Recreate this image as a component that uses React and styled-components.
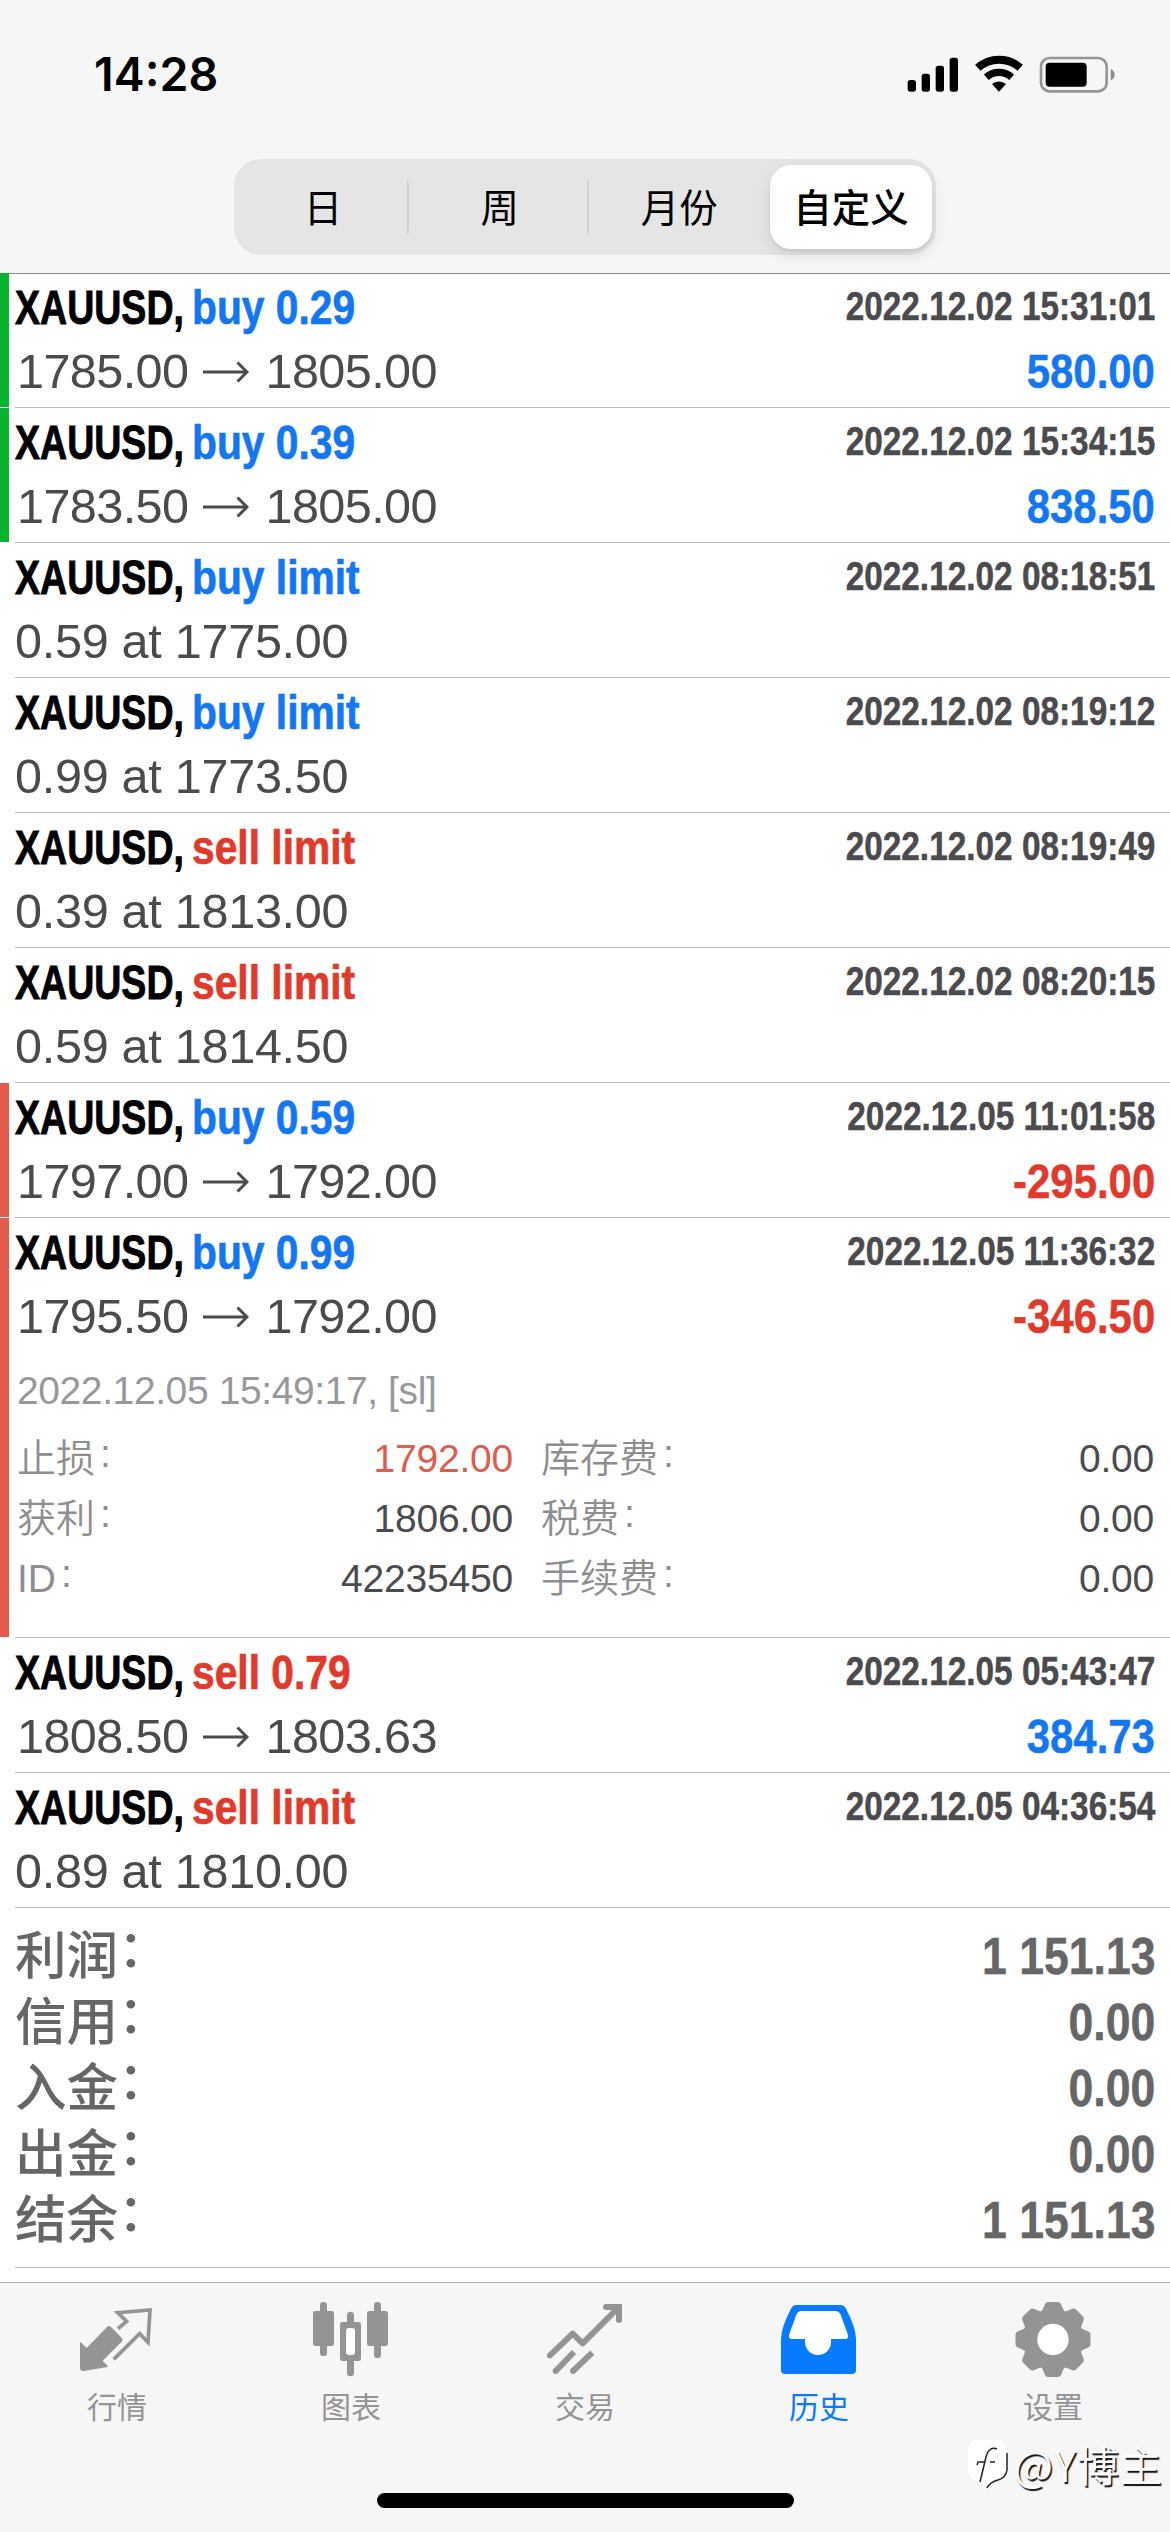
import { useState } from 'react'
import styled, { createGlobalStyle } from 'styled-components'

const GlobalStyle = createGlobalStyle`
	* { box-sizing: border-box; }
	body {
		margin: 0;
		background: #fff;
		font-family: "Liberation Sans", "Noto Sans CJK SC", sans-serif;
	}
`

const BLUE = '#1477f2'
const RED = '#e03a2c'

const orders = [
	{ id: 1, side: 'buy 0.29', time: '2022.12.02 15:31:01', open: '1785.00', close: '1805.00', profit: '580.00', bar: '#08b42e' },
	{ id: 2, side: 'buy 0.39', time: '2022.12.02 15:34:15', open: '1783.50', close: '1805.00', profit: '838.50', bar: '#08b42e' },
	{ id: 3, side: 'buy limit', time: '2022.12.02 08:18:51', text: '0.59 at 1775.00' },
	{ id: 4, side: 'buy limit', time: '2022.12.02 08:19:12', text: '0.99 at 1773.50' },
	{ id: 5, side: 'sell limit', time: '2022.12.02 08:19:49', text: '0.39 at 1813.00' },
	{ id: 6, side: 'sell limit', time: '2022.12.02 08:20:15', text: '0.59 at 1814.50' },
	{ id: 7, side: 'buy 0.59', time: '2022.12.05 11:01:58', open: '1797.00', close: '1792.00', profit: '-295.00', bar: '#e35b4b' },
	{
		id: 8, side: 'buy 0.99', time: '2022.12.05 11:36:32', open: '1795.50', close: '1792.00', profit: '-346.50', bar: '#e35b4b',
		comment: '2022.12.05 15:49:17, [sl]',
		info: [
			['止损', '1792.00', '#dd5d4e'], ['库存费', '0.00'],
			['获利', '1806.00'], ['税费', '0.00'],
			['ID', '42235450'], ['手续费', '0.00'],
		],
	},
	{ id: 9, side: 'sell 0.79', time: '2022.12.05 05:43:47', open: '1808.50', close: '1803.63', profit: '384.73' },
	{ id: 10, side: 'sell limit', time: '2022.12.05 04:36:54', text: '0.89 at 1810.00' },
]

const summary = [
	['利润', '1 151.13'],
	['信用', '0.00'],
	['入金', '0.00'],
	['出金', '0.00'],
	['结余', '1 151.13'],
]

const Screen = styled.div`
	position: relative;
	display: flex;
	flex-direction: column;
	width: 1170px;
	height: 2532px;
	overflow: hidden;
	background: #fff;
`

const Header = styled.header`
	flex: none;
	height: 274px;
	background: #f6f6f6;
	border-bottom: 1px solid #8c8c8e;
`

const StatusBar = styled.div`
	display: flex;
	align-items: center;
	justify-content: space-between;
	height: 159px;
	padding: 0 54px 11px 94px;
`

const Clock = styled.div`
	font: 600 46.5px/60px Inter, sans-serif;
	color: #000;
`

const StatusIcons = styled.div`
	display: flex;
	align-items: center;
	gap: 14px;
	svg { display: block; }
`

const Segments = styled.div`
	display: grid;
	grid-template-columns: 172px 178px 178px 162px;
	width: 702px;
	height: 96px;
	margin: 0 auto;
	padding: 6px 4px 6px 3px;
	justify-content: space-between;
	border-radius: 27px;
	background: #e5e5e6;
`

const Segment = styled.button`
	display: flex;
	align-items: center;
	justify-content: center;
	height: 84px;
	padding: 0 0 5px;
	border: 0;
	border-radius: 21px;
	background: ${props => props.$on ? '#fff' : 'transparent'};
	box-shadow: ${props => props.$on ? '0 6px 16px rgba(0,0,0,.1), 0 2px 3px rgba(0,0,0,.06)' : 'none'};
	font: ${props => props.$on ? 500 : 400} 38.5px/78px "Noto Sans CJK SC", sans-serif;
	color: #000;
`

const DividedSegment = styled(Segment)`
	background: linear-gradient(#cfcfd1, #cfcfd1) right center / 2px 54px no-repeat;
`

const List = styled.main`
	flex: none;
	margin-top: -1px;
`

const Row = styled.div`
	display: flex;
	gap: 6px;
	height: ${props => props.$open ? 420 : 135}px;
`

const Bar = styled.div`
	flex: none;
	width: 9px;
	margin-bottom: 1px;
	background: ${props => props.$color || 'transparent'};
`

const Body = styled.div`
	flex: 1;
	padding: 3px 15px 0 0;
	border-bottom: 1px solid #bcbcbe;
`

const Line = styled.div`
	display: flex;
	justify-content: space-between;
	align-items: flex-start;
	height: ${props => props.$h}px;
	line-height: ${props => props.$h}px;
	white-space: pre;
`

const Title = styled.div`
	display: flex;
	font-size: 49px;
	font-weight: 700;
`

// 굵은 글씨는 가로로 좁은 서체라서 scaleX로 줄인다
const Symbol = styled.span`
	width: 177px;
	color: #000;
	-webkit-text-stroke: .9px;
	transform: scaleX(.766);
	transform-origin: left;
`

const Side = styled.span`
	color: ${props => props.$sell ? RED : BLUE};
	-webkit-text-stroke: .7px;
	transform: scaleX(.832);
	transform-origin: left;
`

const Time = styled.div`
	font-size: 40px;
	font-weight: 700;
	line-height: 60px;
	color: #4b4b4e;
	-webkit-text-stroke: .5px;
	transform: scaleX(.834);
	transform-origin: right;
`

const Prices = styled.div`
	display: flex;
	align-items: center;
	padding: ${props => props.$limit ? '2px 0 0' : '2px 0 0 2px'};
	font-size: 48.6px;
	letter-spacing: ${props => props.$limit ? '-.3px' : '-.6px'};
	color: #4b4b4e;
	svg { margin: 0 16px 0 15px; }
`

const Profit = styled.div`
	padding-top: 2px;
	font-size: 49px;
	font-weight: 700;
	color: ${props => props.$loss ? RED : BLUE};
	-webkit-text-stroke: .5px;
	transform: scaleX(.855);
	transform-origin: right;
`

const Comment = styled.div`
	margin: 15px 0 8px 2px;
	font-size: 39px;
	line-height: 60px;
	letter-spacing: -.4px;
	color: #98989a;
`

const Info = styled.div`
	display: grid;
	grid-template-columns: 496px 613px;
	column-gap: 28px;
	padding-left: 2px;
`

const InfoCell = styled.div`
	display: flex;
	justify-content: space-between;
	height: 60px;
	font-size: 39px;
	line-height: 60px;
	letter-spacing: -.2px;
	color: ${props => props.$color || '#4b4b4e'};
`

const InfoLabel = styled.span`
	font-weight: 350;
	letter-spacing: 0;
	color: #8e8e90;
`

const Colon = styled.span`
	display: inline-block;
	margin-left: ${props => props.$gap || 0}px;
	line-height: 1;
	transform: translateY(-.13em);
`

const Summary = styled.div`
	height: 360px;
	margin-left: 15px;
	padding: 15px 15px 0 0;
	border-bottom: 1px solid #bcbcbe;
`

const Total = styled.div`
	display: flex;
	justify-content: space-between;
	height: 66px;
	font-size: 51.5px;
	font-weight: 500;
	line-height: 67px;
	color: #666;
`

const TotalValue = styled.span`
	font-weight: 700;
	line-height: 66px;
	-webkit-text-stroke: .5px;
	transform: scaleX(.865);
	transform-origin: right;
`

const TabBar = styled.nav`
	flex: none;
	display: flex;
	height: 250px;
	margin-top: auto;
	background: #f6f6f6;
	border-top: 1px solid #adadaf;
`

const Tab = styled.button`
	display: flex;
	flex: 1;
	flex-direction: column;
	align-items: center;
	padding: 15px 0 0;
	border: 0;
	background: none;
	color: ${props => props.$on ? '#087aff' : '#949494'};
	svg { display: block; }
`

const TabLabel = styled.span`
	margin-top: 6px;
	font: 400 30px/42px "Noto Sans CJK SC", sans-serif;
`

const HomeIndicator = styled.div`
	position: absolute;
	left: 377px;
	bottom: 24px;
	width: 417px;
	height: 15px;
	border-radius: 8px;
	background: #000;
`

const Watermark = styled.div`
	position: absolute;
	right: 7px;
	bottom: 38px;
	display: flex;
	align-items: center;
	gap: 6px;
	font: 350 42px/60px "Noto Sans CJK SC", sans-serif;
	letter-spacing: 1px;
	color: #fff;
	text-shadow: 1.5px 1.5px 1px #111;
`

function SignalIcon() {
	return (
		<svg width="52" height="40" viewBox="50 40 156 120">
			<rect x="52" y="118" width="25" height="35" rx="8" />
			<rect x="94" y="99" width="25" height="54" rx="8" />
			<rect x="136" y="75" width="25" height="78" rx="8" />
			<rect x="178" y="51" width="25" height="102" rx="8" />
		</svg>
	)
}

function WifiIcon() {
	return (
		<svg width="52" height="40" viewBox="249 40 156 120" fill="none" stroke="#000">
			<path d="M263.4 81.4A95 95 0 0 1 390.6 81.4" strokeWidth="24" />
			<path d="M288.9 109.6A57 57 0 0 1 365.1 109.6" strokeWidth="22" />
			<path d="M327 153L306 130A32 32 0 0 1 348 130Z" fill="#000" stroke="none" />
		</svg>
	)
}

function BatteryIcon() {
	return (
		<svg width="77" height="40" viewBox="448 40 231 120">
			<rect x="454" y="52" width="197" height="100" rx="26" fill="none" stroke="#959595" strokeWidth="8" />
			<rect x="468" y="66" width="123" height="72" rx="12" />
			<path d="M663 85Q675 91 675 102T663 119Z" fill="#8c8c8c" />
		</svg>
	)
}

function Arrow() {
	return (
		<svg width="46" height="24" viewBox="0 0 46 24" fill="none" stroke="currentColor" strokeWidth="3">
			<path d="M0 12H44M34.5 2.5L44 12L34.5 21.5" />
		</svg>
	)
}

function QuotesIcon() {
	return (
		<svg width="80" height="80" viewBox="21 24 240 240">
			<path d="M30 155L50 174L111 111Q117 105 123 111L155 143Q160 149 155 155L98 212L113 228V231L40 243Q30 243 30 234Z" fill="currentColor" />
			<path d="M144 116L170 94L143 68L240 60L234 157L209 131L131 208" fill="none" stroke="currentColor" strokeWidth="11" />
		</svg>
	)
}

function ChartIcon() {
	return (
		<svg width="80" height="80" viewBox="723 24 240 240" fill="currentColor">
			<rect x="729" y="63" width="63" height="105" rx="7" />
			<rect x="750" y="36" width="21" height="162" rx="10" />
			<rect x="891" y="63" width="63" height="105" rx="7" />
			<rect x="912" y="36" width="21" height="168" rx="10" />
			<path d="M817 96H831V76A10 10 0 0 1 852 76V96H866Q873 96 873 103V206Q873 213 866 213H852V248A10 10 0 0 1 831 248V213H817Q810 213 810 206V103Q810 96 817 96Z" />
			<rect x="828" y="114" width="27" height="81" rx="9" fill="#fff" />
		</svg>
	)
}

function TradeIcon() {
	return (
		<svg width="80" height="80" viewBox="15 24 240 240" fill="none" stroke="currentColor" strokeWidth="18" strokeLinejoin="round">
			<path d="M30 196L98 131L128 160L234 54" strokeLinecap="round" />
			<path d="M198 51H237V90" strokeLinecap="round" strokeLinejoin="miter" />
			<path d="M102 186L47 243M157 188L99 243" />
			<circle cx="47" cy="243" r="9" fill="currentColor" stroke="none" />
			<circle cx="99" cy="243" r="9" fill="currentColor" stroke="none" />
		</svg>
	)
}

function HistoryIcon() {
	return (
		<svg width="80" height="80" viewBox="717 24 240 240">
			<path d="M770 45H901Q912 45 917 55Q947 110 948 147V240Q948 252 936 252H735Q723 252 723 240V147Q724 110 754 55Q759 45 770 45Z" fill="currentColor" />
			<path d="M785 63H886Q897 63 902 74L923 132Q927 147 916 147H873V156A39 39 0 0 1 795 156V147H755Q744 147 748 132L769 74Q774 63 785 63Z" fill="#fff" />
		</svg>
	)
}

function SettingsIcon() {
	return (
		<svg width="80" height="80" viewBox="-40 -41.5 80 80" fill="currentColor">
			<circle r="30" />
			{[0, 45, 90, 135, 180, 225, 270, 315].map(a => (
				<path key={a} transform={`rotate(${a})`} d="M-13 -26Q-10.500 -29 -9 -33Q-7.600 -37.500 -5 -37.500H5Q7.600 -37.500 9 -33Q10.500 -29 13 -26Z" />
			))}
			<circle r="15.7" fill="#fff" />
		</svg>
	)
}

function WatermarkLogo() {
	return (
		<svg width="41" height="50" viewBox="0 0 41 50" fill="none">
			<path d="M12 1H29Q40 1 40 13V30Q40 40 30 41Q24 42 20 47L21 41H12Q1 41 1 30V13Q1 1 12 1Z" fill="#fff" />
			<path d="M30 10Q22 7 19 18L13 43M10 26L11 23H17M23 23H28M40 14V31Q39 39 31 41Q23 43 20 49" stroke="#222" strokeWidth="1.500" />
		</svg>
	)
}

const tabs = [
	['行情', QuotesIcon],
	['图表', ChartIcon],
	['交易', TradeIcon],
	['历史', HistoryIcon],
	['设置', SettingsIcon],
]

function Order({ order, open, onClick }) {
	return (
		<Row $open={open} onClick={onClick}>
			<Bar $color={order.bar} />
			<Body>
				<Line $h={62}>
					<Title>
						<Symbol>XAUUSD,</Symbol>
						<Side $sell={order.side.startsWith('sell')}>{order.side}</Side>
					</Title>
					<Time>{order.time}</Time>
				</Line>
				<Line $h={63}>
					<Prices $limit={!!order.text}>
						{order.text ? order.text : <>{order.open}<Arrow />{order.close}</>}
					</Prices>
					{order.profit && <Profit $loss={order.profit[0] == '-'}>{order.profit}</Profit>}
				</Line>
				{open && <>
					<Comment>{order.comment}</Comment>
					<Info>
						{order.info.map(([name, value, color]) => (
							<InfoCell key={name} $color={color}>
								<InfoLabel>{name}<Colon $gap={5}>:</Colon></InfoLabel>
								{value}
							</InfoCell>
						))}
					</Info>
				</>}
			</Body>
		</Row>
	)
}

function App() {
	let [range, setRange] = useState(3)
	let [tab, setTab] = useState(3)
	let [openId, setOpenId] = useState(8)

	return (
		<Screen>
			<GlobalStyle />
			<Header>
				<StatusBar>
					<Clock>14:28</Clock>
					<StatusIcons>
						<SignalIcon />
						<WifiIcon />
						<BatteryIcon />
					</StatusIcons>
				</StatusBar>
				<Segments>
					{['日', '周', '月份', '自定义'].map((name, i) => {
						// 선택된 칸과 그 왼쪽에는 구분선이 없다
						let Item = i < 3 && i != range && i + 1 != range ? DividedSegment : Segment
						return <Item key={name} $on={range == i} onClick={() => setRange(i)}>{name}</Item>
					})}
				</Segments>
			</Header>

			<List>
				{orders.map(order => (
					<Order
						key={order.id}
						order={order}
						open={order.id == openId && !!order.info}
						onClick={() => setOpenId(order.id == openId ? null : order.id)}
					/>
				))}
				<Summary>
					{summary.map(([name, value]) => (
						<Total key={name}>
							<span>{name}<Colon>：</Colon></span>
							<TotalValue>{value}</TotalValue>
						</Total>
					))}
				</Summary>
			</List>

			<TabBar>
				{tabs.map(([name, Icon], i) => (
					<Tab key={name} $on={tab == i} onClick={() => setTab(i)}>
						<Icon />
						<TabLabel>{name}</TabLabel>
					</Tab>
				))}
			</TabBar>
			<HomeIndicator />
			<Watermark>
				<WatermarkLogo />
				@Y博主
			</Watermark>
		</Screen>
	)
}

export default App
